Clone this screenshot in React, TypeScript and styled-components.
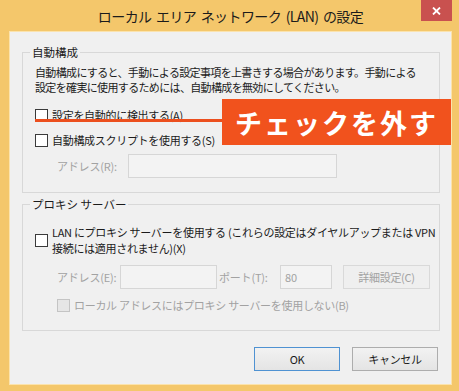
import styled, { createGlobalStyle } from "styled-components";

const GlobalStyle = createGlobalStyle`
  html, body {
    margin: 0;
    padding: 0;
    background: #f4c76b;
  }
  body {
    font-family: "Noto Sans CJK JP", "Noto Sans", sans-serif;
    font-size: 11px;
    color: #1b1b1b;
  }
`;

const Window = styled.div`
  position: relative;
  box-sizing: border-box;
  width: 459px;
  height: 391px;
  padding: 0 7px 6px 9px;
  background: #f4c76b;
  display: flex;
  flex-direction: column;
  overflow: hidden;
`;

const TitleBar = styled.div`
  flex: none;
  height: 31px;
  display: grid;
  grid-template-columns: 1fr auto 1fr;
`;

const Title = styled.div`
  grid-column: 2;
  font-size: 14px;
  letter-spacing: -0.6px;
  word-spacing: 2px;
  line-height: 33px;
  white-space: nowrap;
`;

const CloseButton = styled.div`
  grid-column: 3;
  justify-self: end;
  width: 31px;
  height: 21px;
  background: #c9514f;
  display: flex;
  align-items: center;
  justify-content: center;
`;

const Client = styled.div`
  flex: 1;
  box-sizing: border-box;
  background: #f0f0f0;
  border: 1px solid #fbe3ad;
  padding: 12px 11px 0 12px;
  display: flex;
  flex-direction: column;
`;

const Group = styled.fieldset<{ $bottom: number; $top?: number }>`
  margin: ${(p) => p.$top ?? 0}px 0 0 0;
  padding: 6px 12px ${(p) => p.$bottom}px 12px;
  border: 1px solid #d8d8d8;
  min-width: 0;
  display: flex;
  flex-direction: column;
`;

const Legend = styled.legend`
  padding: 0 2px;
  margin-left: -5px;
  font-size: 11.5px;
  line-height: 16px;
`;

const Desc = styled.p<{ $first?: boolean }>`
  margin: ${(p) => (p.$first ? "-1px" : "0")} 0 0 0;
  line-height: 15px;
  letter-spacing: -0.65px;
  white-space: nowrap;
`;

const CheckRow = styled.div<{ $top: number; $indent?: number }>`
  display: flex;
  align-items: center;
  min-height: 18px;
  margin-top: ${(p) => p.$top}px;
  margin-left: ${(p) => p.$indent ?? 0}px;
`;

const CheckBox = styled.span<{ $disabled?: boolean }>`
  flex: none;
  box-sizing: border-box;
  width: 13px;
  height: 13px;
  margin-right: 4px;
  border: 1px solid ${(p) => (p.$disabled ? "#c4c4c4" : "#3a3a3a")};
  background: ${(p) => (p.$disabled ? "#e6e6e6" : "#ffffff")};
`;

const CheckText = styled.span<{ $disabled?: boolean }>`
  line-height: 16px;
  letter-spacing: -0.3px;
  white-space: nowrap;
  color: ${(p) => (p.$disabled ? "#a2a2a2" : "#1b1b1b")};
`;

const FieldRow = styled.div<{ $top: number }>`
  display: flex;
  align-items: center;
  margin-top: ${(p) => p.$top}px;
  margin-left: 22px;
`;

const FieldLabel = styled.span<{ $width: number; $pad?: number }>`
  flex: none;
  box-sizing: border-box;
  width: ${(p) => p.$width}px;
  padding-left: ${(p) => p.$pad ?? 0}px;
  color: #a2a2a2;
  letter-spacing: -0.2px;
  white-space: nowrap;
`;

const TextBox = styled.div<{ $width: number }>`
  flex: none;
  box-sizing: border-box;
  width: ${(p) => p.$width}px;
  height: 24px;
  padding: 0 4px;
  border: 1px solid #d6d6d6;
  background: #f3f3f3;
  color: #a2a2a2;
  line-height: 22px;
`;

const Button = styled.div<{ $primary?: boolean; $disabled?: boolean; $width: number; $left?: number }>`
  flex: none;
  box-sizing: border-box;
  width: ${(p) => p.$width}px;
  height: 24px;
  margin-left: ${(p) => p.$left ?? 0}px;
  display: flex;
  align-items: center;
  justify-content: center;
  border: 1px solid
    ${(p) => (p.$primary ? "#4f92d2" : p.$disabled ? "#d9d9d9" : "#adadad")};
  background: ${(p) =>
    p.$disabled ? "#efefef" : "linear-gradient(#f2f2f2, #e4e4e4)"};
  color: ${(p) => (p.$disabled ? "#a2a2a2" : "#1b1b1b")};
  letter-spacing: -0.3px;
  white-space: nowrap;
`;

const ButtonBar = styled.div`
  display: flex;
  justify-content: flex-end;
  gap: 12px;
  margin: 16px 2px 0 0;
`;

const Callout = styled.div`
  position: absolute;
  left: 222px;
  top: 99px;
  width: 229px;
  height: 46px;
  background: #f1521d;
  color: #ffffff;
  font-size: 27px;
  font-weight: 700;
  letter-spacing: 2px;
  display: flex;
  align-items: center;
  justify-content: center;
  white-space: nowrap;
`;

const Pointer = styled.div`
  position: absolute;
  left: 35px;
  top: 119px;
  width: 188px;
  height: 3px;
  background: #ec4f1e;
`;

export default function App() {
  return (
    <>
      <GlobalStyle />
      <Window>
        <TitleBar>
          <Title>ローカル エリア ネットワーク (LAN) の設定</Title>
          <CloseButton>
            <svg width="9" height="8" viewBox="0 0 9 8">
              <path d="M1 0.5 L8 7.5 M8 0.5 L1 7.5" stroke="#fff" strokeWidth="1.8" />
            </svg>
          </CloseButton>
        </TitleBar>
        <Client>
          <Group $bottom={14}>
            <Legend>自動構成</Legend>
            <Desc $first>自動構成にすると、手動による設定事項を上書きする場合があります。手動による</Desc>
            <Desc>設定を確実に使用するためには、自動構成を無効にしてください。</Desc>
            <CheckRow $top={11}>
              <CheckBox />
              <CheckText>設定を自動的に検出する(A)</CheckText>
            </CheckRow>
            <CheckRow $top={7}>
              <CheckBox />
              <CheckText>自動構成スクリプトを使用する(S)</CheckText>
            </CheckRow>
            <FieldRow $top={5}>
              <FieldLabel $width={71}>アドレス(R):</FieldLabel>
              <TextBox $width={209} />
            </FieldRow>
          </Group>
          <Group $top={3} $bottom={16}>
            <Legend>プロキシ サーバー</Legend>
            <CheckRow $top={6}>
              <CheckBox />
              <CheckText>
                LAN にプロキシ サーバーを使用する (これらの設定はダイヤルアップまたは VPN
                <br />
                接続には適用されません)(X)
              </CheckText>
            </CheckRow>
            <FieldRow $top={9}>
              <FieldLabel $width={63}>アドレス(E):</FieldLabel>
              <TextBox $width={97} />
              <FieldLabel $width={63} $pad={2}>
                ポート(T):
              </FieldLabel>
              <TextBox $width={52}>80</TextBox>
              <Button $disabled $width={87} $left={11}>
                詳細設定(C)
              </Button>
            </FieldRow>
            <CheckRow $top={7} $indent={22}>
              <CheckBox $disabled />
              <CheckText $disabled>ローカル アドレスにはプロキシ サーバーを使用しない(B)</CheckText>
            </CheckRow>
          </Group>
          <ButtonBar>
            <Button $primary $width={86}>
              OK
            </Button>
            <Button $width={86}>キャンセル</Button>
          </ButtonBar>
        </Client>
        <Pointer />
        <Callout>チェックを外す</Callout>
      </Window>
    </>
  );
}
